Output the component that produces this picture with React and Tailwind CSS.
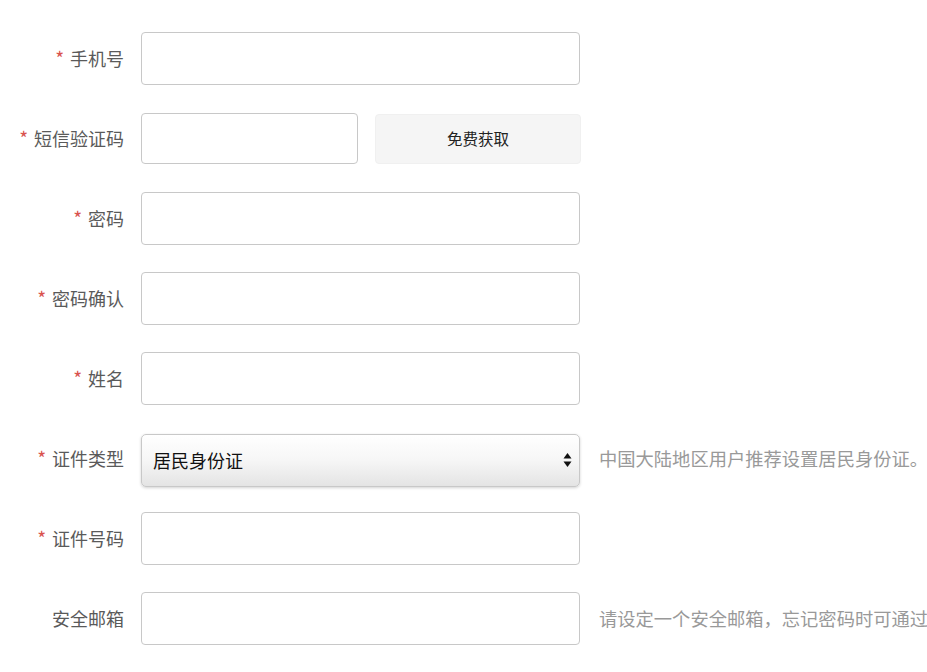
import React from "react";

const font = { fontFamily: '"Noto Sans CJK SC", "Liberation Sans", sans-serif' };

const rows = [
  { label: "手机号", required: true, type: "input" },
  { label: "短信验证码", required: true, type: "sms" },
  { label: "密码", required: true, type: "input" },
  { label: "密码确认", required: true, type: "input" },
  { label: "姓名", required: true, type: "input" },
  {
    label: "证件类型",
    required: true,
    type: "select",
    hint: "中国大陆地区用户推荐设置居民身份证。",
  },
  { label: "证件号码", required: true, type: "input" },
  {
    label: "安全邮箱",
    required: false,
    type: "input",
    hint: "请设定一个安全邮箱，忘记密码时可通过安全邮箱找回密码。",
  },
];

function Field({ type }) {
  if (type === "sms") {
    return (
      <div className="flex items-center gap-[17px]">
        <input className="h-[51px] w-[217px] rounded-[4px] border border-[#c8c8c8] bg-white outline-none" />
        <button
          type="button"
          className="h-[50px] w-[206px] rounded-[4px] border border-[#f0f0f0] bg-[#f5f5f5] text-[15.5px] text-[#222]"
        >
          免费获取
        </button>
      </div>
    );
  }
  if (type === "select") {
    return (
      <div className="relative mt-[3px] flex h-[53px] w-[439px] items-center rounded-[5px] border border-[#c8c8c8] bg-gradient-to-b from-white via-[#f6f6f6] to-[#e4e4e4] pl-[11px] shadow-[0_1px_3px_rgba(0,0,0,0.18)]">
        <span className="text-[18px] text-[#111]">居民身份证</span>
        <svg
          className="absolute right-[7px] top-1/2 -translate-y-1/2"
          width="9"
          height="16"
          viewBox="0 0 9 16"
        >
          <path d="M4.5 1 L8.5 6.5 L0.5 6.5 Z" fill="#111" />
          <path d="M4.5 15 L8.5 9.5 L0.5 9.5 Z" fill="#111" />
        </svg>
      </div>
    );
  }
  return (
    <input className="h-[53px] w-[439px] rounded-[4px] border border-[#c8c8c8] bg-white outline-none" />
  );
}

export default function App() {
  return (
    <div
      className="h-[672px] w-[927px] overflow-hidden bg-white pt-[32px]"
      style={font}
    >
      <div className="flex flex-col gap-[27px]">
        {rows.map((row) => (
          <div key={row.label} className="flex h-[53px] items-center whitespace-nowrap">
            <label className="w-[124px] shrink-0 text-right text-[18px] text-[#5a5a5a]">
              {row.required && (
                <span className="mr-[6px] text-[19px] text-[#d9534f]">*</span>
              )}
              {row.label}
            </label>
            <div className="ml-[17px] shrink-0">
              <Field type={row.type} />
            </div>
            {row.hint && (
              <span className="ml-[19px] shrink-0 text-[18.3px] text-[#999]">
                {row.hint}
              </span>
            )}
          </div>
        ))}
      </div>
    </div>
  );
}
